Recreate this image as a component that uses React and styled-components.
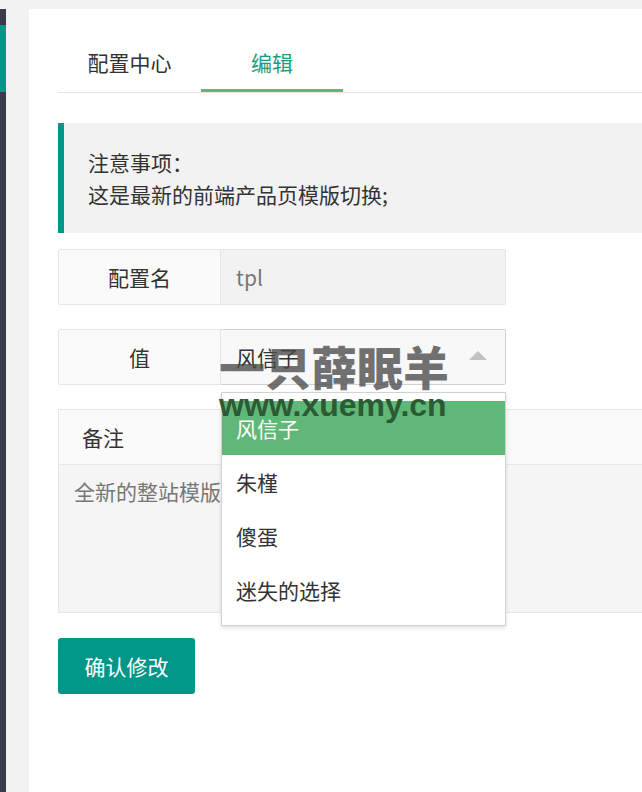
import React from 'react';
import styled, { createGlobalStyle } from 'styled-components';

const GlobalStyle = createGlobalStyle`
  html, body {
    margin: 0;
    padding: 0;
    background: #f2f2f2;
    font-family: "Noto Sans CJK SC", "Noto Sans", sans-serif;
  }
`;

const Page = styled.div`
  position: relative;
  display: flex;
  height: 792px;
  overflow: hidden;
  background: #f2f2f2;
`;

const Side = styled.div`
  width: 6px;
  margin-top: 9px;
  background: #393d49;
  padding-top: 16px;
  flex-shrink: 0;
`;

const SideActive = styled.div`
  height: 67px;
  background: #009688;
`;

const Card = styled.div`
  flex: 1;
  margin: 9px 0 0 23px;
  background: #fff;
  padding: 23px 0 0 29px;
  font-size: 21px;
  color: #333;
`;

const Tabs = styled.div`
  display: flex;
  height: 60px;
  border-bottom: 1px solid #e6e6e6;
`;

const Tab = styled.div`
  width: ${p => (p.$active ? 142 : 143)}px;
  height: 60px;
  line-height: 60px;
  text-align: center;
  box-sizing: border-box;
  color: ${p => (p.$active ? '#1f9a7c' : '#333')};
  border-bottom: 3px solid ${p => (p.$active ? '#5fb878' : 'transparent')};
`;

const Notice = styled.div`
  margin-top: 30px;
  background: #f2f2f2;
  border-left: 6px solid #009688;
  padding: 23px 24px;
  line-height: 32px;
`;

const Row = styled.div`
  position: relative;
  display: flex;
  width: 448px;
  height: 56px;
  margin-top: ${p => p.$gap}px;
`;

const Label = styled.div`
  width: 163px;
  box-sizing: border-box;
  border: 1px solid #e6e6e6;
  border-radius: 2px 0 0 2px;
  background: #fafafa;
  display: flex;
  align-items: center;
  justify-content: center;
`;

const Field = styled.div`
  flex: 1;
  box-sizing: border-box;
  border: 1px solid ${p => (p.$select ? '#d2d2d2' : '#e6e6e6')};
  border-left: none;
  border-radius: 0 2px 2px 0;
  background: ${p => (p.$select ? '#f8f8f8' : '#f2f2f2')};
  color: ${p => (p.$select ? '#333' : '#777')};
  display: flex;
  align-items: center;
  justify-content: space-between;
  padding: 0 18px 0 15px;
`;

const Caret = styled.span`
  width: 0;
  height: 0;
  border-left: 9px solid transparent;
  border-right: 9px solid transparent;
  border-bottom: 9px solid #c2c2c2;
  margin-bottom: 4px;
`;

const Dropdown = styled.div`
  position: absolute;
  top: 63px;
  left: 163px;
  width: 285px;
  box-sizing: border-box;
  background: #fff;
  border: 1px solid #d2d2d2;
  box-shadow: 0 2px 4px rgba(0, 0, 0, 0.12);
  padding: 8px 0;
  z-index: 5;
`;

const Option = styled.div`
  height: 54px;
  line-height: 54px;
  padding-left: 14px;
  background: ${p => (p.$selected ? '#5fb878' : '#fff')};
  color: ${p => (p.$selected ? '#fff' : '#333')};
`;

const Remark = styled.div`
  margin-top: 24px;
  border: 1px solid #e6e6e6;
  border-right: none;
`;

const RemarkHead = styled.div`
  height: 54px;
  line-height: 54px;
  padding-left: 23px;
  background: #fafafa;
  border-bottom: 1px solid #e6e6e6;
`;

const RemarkBody = styled.div`
  height: 147px;
  background: #f5f5f5;
  color: #777;
  padding: 10px 15px;
  box-sizing: border-box;
  line-height: 32px;
  white-space: nowrap;
`;

const Button = styled.button`
  margin-top: 25px;
  width: 137px;
  height: 56px;
  border: none;
  border-radius: 3px;
  background: #009688;
  color: #fff;
  font-family: inherit;
  font-size: 21px;
`;

const Watermark = styled.div`
  position: absolute;
  left: 219px;
  top: 337px;
  pointer-events: none;
  z-index: 10;
`;

const MarkTitle = styled.div`
  font-family: "Noto Sans CJK SC", sans-serif;
  font-weight: 900;
  font-size: 46px;
  line-height: 56px;
  color: rgba(75, 75, 75, 0.78);
`;

const MarkUrl = styled.div`
  font-family: "Liberation Sans", Arial, sans-serif;
  font-weight: 700;
  font-size: 32px;
  line-height: 30px;
  color: #2c5a33;
  margin-top: -3px;
`;

const options = ['风信子', '朱槿', '傻蛋', '迷失的选择'];

export default function App() {
  return (
    <Page>
      <GlobalStyle />
      <Side>
        <SideActive />
      </Side>
      <Card>
        <Tabs>
          <Tab>配置中心</Tab>
          <Tab $active>编辑</Tab>
        </Tabs>
        <Notice>
          注意事项：
          <br />
          这是最新的前端产品页模版切换;
        </Notice>
        <Row $gap={16}>
          <Label>配置名</Label>
          <Field>tpl</Field>
        </Row>
        <Row $gap={24}>
          <Label>值</Label>
          <Field $select>
            风信子
            <Caret />
          </Field>
          <Dropdown>
            {options.map((o, i) => (
              <Option key={o} $selected={i === 0}>{o}</Option>
            ))}
          </Dropdown>
        </Row>
        <Remark>
          <RemarkHead>备注</RemarkHead>
          <RemarkBody>全新的整站模版切换</RemarkBody>
        </Remark>
        <Button>确认修改</Button>
      </Card>
      <Watermark>
        <MarkTitle>一只薛眠羊</MarkTitle>
        <MarkUrl>www.xuemy.cn</MarkUrl>
      </Watermark>
    </Page>
  );
}
